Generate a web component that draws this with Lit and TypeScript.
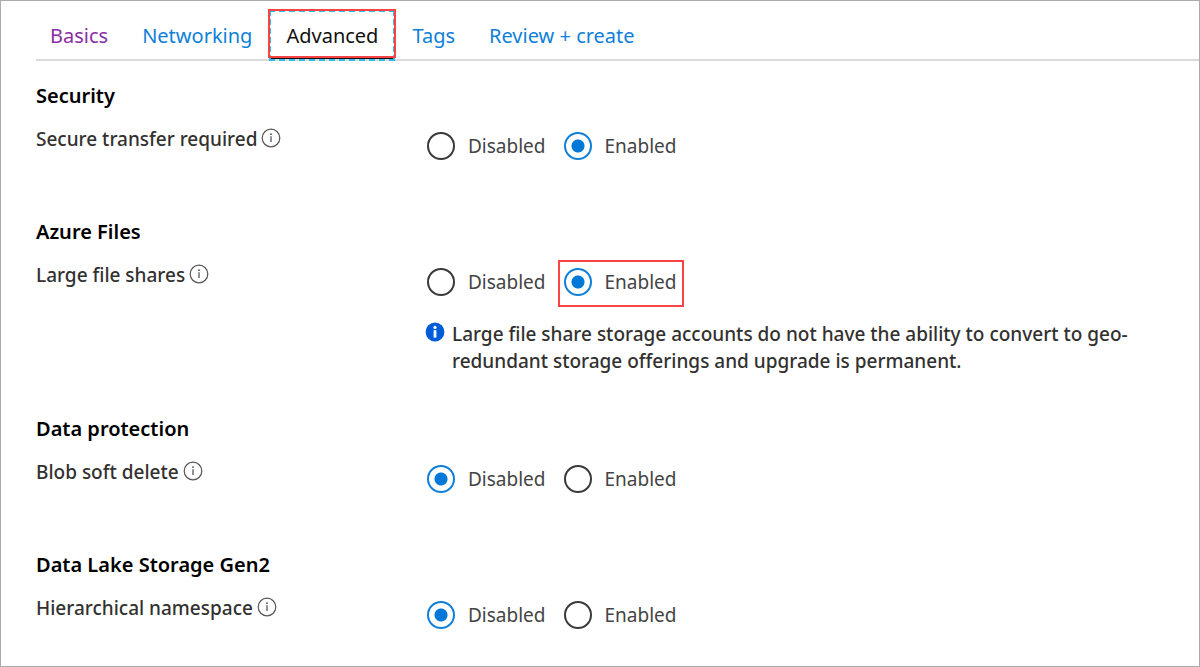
import { LitElement, html, css, nothing } from 'lit';
import { customElement, property, state } from 'lit/decorators.js';
import { classMap } from 'lit/directives/class-map.js';

interface Setting {
  id: string;
  heading: string;
  label: string;
  value: string;
  highlight?: string;
  note?: string;
}

const TABS = ['Basics', 'Networking', 'Advanced', 'Tags', 'Review + create'];

const SETTINGS: Setting[] = [
  { id: 'secure-transfer', heading: 'Security', label: 'Secure transfer required', value: 'Enabled' },
  {
    id: 'large-files',
    heading: 'Azure Files',
    label: 'Large file shares',
    value: 'Enabled',
    highlight: 'Enabled',
    note: 'Large file share storage accounts do not have the ability to convert to geo-redundant storage offerings and upgrade is permanent.',
  },
  { id: 'soft-delete', heading: 'Data protection', label: 'Blob soft delete', value: 'Disabled' },
  { id: 'namespace', heading: 'Data Lake Storage Gen2', label: 'Hierarchical namespace', value: 'Disabled' },
];

@customElement('tab-strip')
class TabStrip extends LitElement {
  @state() current = 'Advanced';

  static styles = css`
    :host {
      display: block;
    }
    .tabs {
      display: flex;
      border-bottom: 2px solid #dadada;
    }
    .tab {
      position: relative;
      padding: 13px 17px 9px;
      font-size: 20px;
      line-height: 28px;
      color: #0f7fd9;
      text-decoration: none;
      white-space: nowrap;
    }
    .tab:first-child {
      padding-left: 14px;
    }
    .visited {
      color: #8a2da5;
    }
    .current {
      color: #111;
    }
    .current::before {
      content: '';
      position: absolute;
      inset: 1px 0 -2px 0;
      border: 2px dashed #2bbdf0;
      background: linear-gradient(#111, #111) bottom / 100% 1px no-repeat;
    }
    .current::after {
      content: '';
      position: absolute;
      inset: 0 -1px 1px;
      border: 2px solid #fb4346;
    }
  `;

  render() {
    return html`<nav class="tabs" aria-label="Storage account steps">
      ${TABS.map(
        (t) => html`<a
          href="#"
          class=${classMap({ tab: true, visited: t === 'Basics', current: t === this.current })}
          aria-current=${t === this.current ? 'step' : nothing}
          @click=${(e: Event) => {
            e.preventDefault();
            this.current = t;
          }}
          >${t}</a
        >`,
      )}
    </nav>`;
  }
}

@customElement('setting-section')
class SettingSection extends LitElement {
  @property({ attribute: false }) setting!: Setting;

  static styles = css`
    :host {
      display: block;
    }
    .heading {
      margin: 0 0 15px;
      font-size: 20px;
      line-height: 28px;
      font-weight: 600;
      color: #000;
    }
    .row {
      display: grid;
      grid-template-columns: 389px minmax(0, 1fr);
    }
    .label {
      display: flex;
      align-items: flex-start;
      gap: 4px;
      font-size: 19px;
      line-height: 28px;
      font-weight: 500;
      color: #323130;
    }
    .hint {
      flex: none;
      width: 20px;
      height: 20px;
      margin-top: 3px;
    }
    .options {
      display: flex;
      gap: 18px;
      padding: 7px 0 18px 2px;
    }
    .option {
      position: relative;
      display: flex;
      align-items: center;
      gap: 13px;
      font-size: 19px;
      line-height: 28px;
      color: #444;
    }
    .highlight::after {
      content: '';
      position: absolute;
      inset: -8px -7px -11px -6px;
      border: 2px solid #fb4346;
      pointer-events: none;
    }
    .radio {
      appearance: none;
      flex: none;
      box-sizing: border-box;
      width: 28px;
      height: 28px;
      margin: 0;
      border: 2px solid #3b3a39;
      border-radius: 50%;
      background: #fff;
    }
    .radio:checked {
      border-color: #0f7fd9;
      background: radial-gradient(circle, #0078d7 6px, #fff 7px);
    }
    .note {
      display: flex;
      align-items: flex-start;
      gap: 7px;
      max-width: 730px;
      margin: 7px 0 0;
      font-size: 19px;
      line-height: 27px;
      font-weight: 500;
      color: #323130;
    }
    .badge {
      flex: none;
      width: 20px;
      height: 20px;
      margin-top: 1px;
    }
  `;

  render() {
    const s = this.setting;
    return html`
      <h2 class="heading">${s.heading}</h2>
      <div class="row" role="radiogroup" aria-labelledby=${s.id}>
        <div class="label">
          <span id=${s.id}>${s.label}</span>
          <svg class="hint" viewBox="0 0 20 20" aria-hidden="true">
            <circle cx="10" cy="10" r="8.8" fill="none" stroke="#555" stroke-width="1.2" />
            <circle cx="10" cy="6.2" r=".9" fill="#555" />
            <path d="M10 8.3V14" stroke="#555" stroke-width="1.3" />
          </svg>
        </div>
        <div>
          <div class="options">
            ${['Disabled', 'Enabled'].map(
              (o) => html`<label class=${classMap({ option: true, highlight: o === s.highlight })}>
                <input class="radio" type="radio" name=${s.id} value=${o} ?checked=${o === s.value} />${o}
              </label>`,
            )}
          </div>
          ${s.note
            ? html`<p class="note">
                <svg class="badge" viewBox="0 0 20 20" aria-hidden="true">
                  <circle cx="10" cy="10" r="9.4" fill="#015cda" />
                  <circle cx="10" cy="5.4" r="1.6" fill="#fff" />
                  <path d="M10 8.2V15.6" stroke="#fff" stroke-width="2.8" />
                </svg>
                <span>${s.note}</span>
              </p>`
            : nothing}
        </div>
      </div>
    `;
  }
}

@customElement('app-root')
class AppRoot extends LitElement {
  static styles = css`
    :host {
      display: block;
      box-sizing: border-box;
      min-height: 100vh;
      padding: 8px 0 0 35px;
      border: 1px solid #ababab;
      background: #fff;
      font-family: 'Noto Sans', 'Open Sans', sans-serif;
    }
    .sections {
      display: flex;
      flex-direction: column;
      gap: 40px;
      padding: 21px 24px 0 0;
    }
  `;

  render() {
    return html`
      <tab-strip></tab-strip>
      <main class="sections">
        ${SETTINGS.map((s) => html`<setting-section .setting=${s}></setting-section>`)}
      </main>
    `;
  }
}
